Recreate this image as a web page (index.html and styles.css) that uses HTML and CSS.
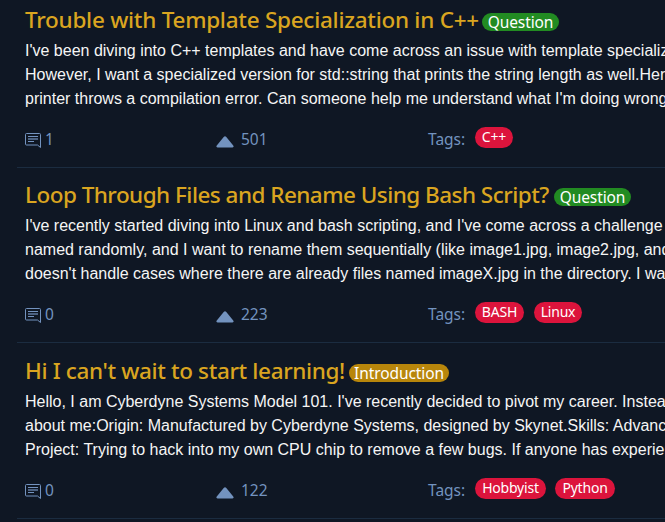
FILE: index.html
```html
<!DOCTYPE html>
<html lang="en">
<head>
<meta charset="utf-8">
<title>Forum posts</title>
<link rel="stylesheet" href="styles.css">
</head>
<body>
<svg class="sprite" width="0" height="0">
  <symbol id="comment" viewBox="0 0 16 15">
    <path d="M1.5.5h13a1 1 0 0 1 1 1v13l-3-2.5h-11a1 1 0 0 1-1-1v-9.500a1 1 0 0 1 1-1z" fill="none" stroke="currentColor"/>
    <path d="M3 3.500h10M3 8.500h6" stroke="currentColor"/>
    <path d="M3 6h10" stroke="currentColor" stroke-width="2" opacity=".6"/>
  </symbol>
  <symbol id="up" viewBox="0 0 18 12">
    <path d="M7.700 1Q9-.4 10.300 1L17.400 9.700Q18.200 11.400 16.500 11.400H1.500Q-.2 11.400.6 9.700Z" fill="currentColor"/>
  </symbol>
</svg>
<main class="posts">
  <article class="post">
    <header class="heading"><h2 class="title t1">Trouble with Template Specialization in C++</h2><span class="kind question">Question</span></header>
    <p class="body">I've been diving into C++ templates and have come across an issue with template specialization.<br>However, I want a specialized version for std::string that prints the string length as well.Here's<br>printer throws a compilation error. Can someone help me understand what I'm doing wrong?</p>
    <footer class="meta">
      <div class="comments"><svg class="ic"><use href="#comment"/></svg><span>1</span></div>
      <div class="votes"><svg class="iu"><use href="#up"/></svg><span>501</span></div>
      <div class="tags"><span class="label">Tags:</span><span class="tag cpp">C++</span></div>
    </footer>
  </article>
  <article class="post">
    <header class="heading"><h2 class="title t2">Loop Through Files and Rename Using Bash Script?</h2><span class="kind question">Question</span></header>
    <p class="body">I've recently started diving into Linux and bash scripting, and I've come across a challenge I<br>named randomly, and I want to rename them sequentially (like image1.jpg, image2.jpg, and so<br>doesn't handle cases where there are already files named imageX.jpg in the directory. I want</p>
    <footer class="meta">
      <div class="comments"><svg class="ic"><use href="#comment"/></svg><span>0</span></div>
      <div class="votes"><svg class="iu"><use href="#up"/></svg><span>223</span></div>
      <div class="tags"><span class="label">Tags:</span><span class="tag bash">BASH</span><span class="tag linux">Linux</span></div>
    </footer>
  </article>
  <article class="post">
    <header class="heading"><h2 class="title t3">Hi I can't wait to start learning!</h2><span class="kind intro">Introduction</span></header>
    <p class="body">Hello, I am Cyberdyne Systems Model 101. I've recently decided to pivot my career. Instead<br>about me:Origin: Manufactured by Cyberdyne Systems, designed by Skynet.Skills: Advanced<br>Project: Trying to hack into my own CPU chip to remove a few bugs. If anyone has experience</p>
    <footer class="meta">
      <div class="comments"><svg class="ic"><use href="#comment"/></svg><span>0</span></div>
      <div class="votes"><svg class="iu"><use href="#up"/></svg><span>122</span></div>
      <div class="tags"><span class="label">Tags:</span><span class="tag hobby">Hobbyist</span><span class="tag python">Python</span></div>
    </footer>
  </article>
</main>
</body>
</html>
```
FILE: styles.css
```css
* { box-sizing: border-box; }
body { margin: 0; height: 522px; overflow: hidden; background: #0f1724; font-family: "Noto Sans", sans-serif; }
.sprite { display: block; }
.posts { margin: -7.6px 0 0 17px; }
.post { height: 175.5px; padding: 9.55px 0 0 8px; border-bottom: 1px solid #1b2c40; white-space: nowrap; overflow: hidden; }
.heading { display: flex; height: 36.65px; align-items: flex-start; }
.title { margin: 0; flex: none; color: #daa520; font-size: 22.5px; line-height: 36px; font-weight: 500; }
.t1 { width: 457px; letter-spacing: -0.26px; }
.t2 { width: 529px; letter-spacing: -0.53px; }
.t3 { width: 324px; letter-spacing: -0.36px; }
.kind { height: 18px; margin-top: 11px; border-radius: 9px; color: #fff; font-size: 15.5px; line-height: 18px; text-align: center; letter-spacing: -0.1px; }
.question { width: 77px; background: #228b22; }
.intro { width: 100px; background: #b8860b; }
.body { margin: 0; color: #f5f5f5; font: 16px/24px "Liberation Sans", sans-serif; }
.meta { display: flex; height: 24px; margin-top: 16.35px; color: #7393bf; font-size: 15.5px; line-height: 24px; }
.comments { width: 191px; display: flex; gap: 4px; }
.votes { width: 212px; display: flex; gap: 7px; }
.ic { width: 16px; height: 15px; margin-top: 6px; }
.iu { width: 18px; height: 12px; margin-top: 9px; }
.tags { display: flex; }
.label { width: 47px; }
.tag { height: 21px; margin: 0 10px 0 0; border-radius: 11px; background: #dc143c; color: #fff; font-size: 14px; line-height: 20px; text-align: center; letter-spacing: -0.2px; }
.cpp { width: 38px; }
.bash { width: 49px; }
.linux { width: 48px; }
.hobby { width: 71px; margin-right: 9px; }
.python { width: 60px; }
```
